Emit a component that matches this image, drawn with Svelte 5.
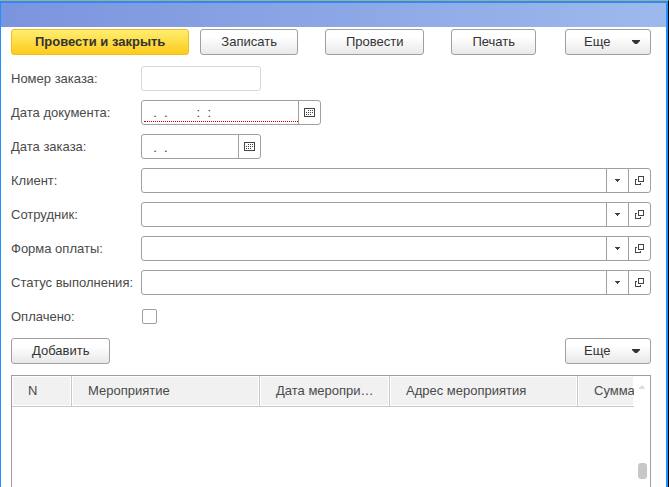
<script>
    let order = $state({
        number: "",
        documentDate: "  .  .        :  :  ",
        orderDate: "  .  .    ",
        paid: false,
    });

    let references = $state([
        { id: "client", label: "Клиент:", value: "" },
        { id: "employee", label: "Сотрудник:", value: "" },
        { id: "payment", label: "Форма оплаты:", value: "" },
        { id: "status", label: "Статус выполнения:", value: "" },
    ]);

    const columns = [
        { title: "N", kind: "number" },
        { title: "Мероприятие", kind: "wide" },
        { title: "Дата мероприятия", kind: "date" },
        { title: "Адрес мероприятия", kind: "wide" },
        { title: "Сумма", kind: "sum" },
    ];
</script>

{#snippet calendar()}
    <svg width="11" height="9" viewBox="0 0 11 9" shape-rendering="crispEdges">
        <path d="M0 0h11v9H0zM1 1v7h9V1z" fill="#444" fill-rule="evenodd" />
        <path
            d="M4 2h1v1H4zM6 2h1v1H6zM8 2h1v1H8zM2 4h1v1H2zM4 4h1v1H4zM6 4h1v1H6zM8 4h1v1H8zM2 6h1v1H2zM4 6h1v1H4zM6 6h1v1H6z"
            fill="#444"
        />
    </svg>
{/snippet}

{#snippet more()}
    <button class="btn more">
        Еще
        <svg width="8" height="5" viewBox="0 0 8 5">
            <path d="M0 0h8v1L5 4H3L0 1z" fill="#333" />
        </svg>
    </button>
{/snippet}

<div class="window">
    <header class="title"></header>

    <main>
        <div class="toolbar">
            <button class="btn primary">Провести и закрыть</button>
            <div class="commands">
                <button class="btn">Записать</button>
                <button class="btn">Провести</button>
                <button class="btn">Печать</button>
            </div>
            {@render more()}
        </div>

        <form class="fields">
            <div class="row">
                <label for="number">Номер заказа:</label>
                <div class="field short disabled">
                    <input id="number" type="text" bind:value={order.number} disabled />
                </div>
            </div>
            <div class="row">
                <label for="document-date">Дата документа:</label>
                <div class="field medium required">
                    <input id="document-date" type="text" bind:value={order.documentDate} />
                    <button type="button" aria-label="Выбрать дату документа">
                        {@render calendar()}
                    </button>
                </div>
            </div>
            <div class="row">
                <label for="order-date">Дата заказа:</label>
                <div class="field short">
                    <input id="order-date" type="text" bind:value={order.orderDate} />
                    <button type="button" aria-label="Выбрать дату заказа">
                        {@render calendar()}
                    </button>
                </div>
            </div>
            {#each references as ref (ref.id)}
                <div class="row">
                    <label for={ref.id}>{ref.label}</label>
                    <div class="field">
                        <input id={ref.id} type="text" bind:value={ref.value} />
                        <button type="button" aria-label="Выбрать из списка">
                            <svg width="5" height="3" viewBox="0 0 5 3" shape-rendering="crispEdges">
                                <path d="M0 0h5v1H4v1H3v1H2V2H1V1H0z" fill="#444" />
                            </svg>
                        </button>
                        <button type="button" aria-label="Открыть">
                            <svg width="9" height="9" viewBox="0 0 9 9" shape-rendering="crispEdges">
                                <path
                                    d="M3 0h6v6H3zM4 1v4h4V1zM0 3h2v1H1v4h4V7h1v2H0z"
                                    fill="#444"
                                    fill-rule="evenodd"
                                />
                            </svg>
                        </button>
                    </div>
                </div>
            {/each}
            <div class="row">
                <label for="paid">Оплачено:</label>
                <input id="paid" type="checkbox" bind:checked={order.paid} />
            </div>
        </form>

        <div class="toolbar events-bar">
            <button class="btn">Добавить</button>
            {@render more()}
        </div>

        <div class="events">
            <div class="grid">
                <table>
                    <thead>
                        <tr>
                            {#each columns as column}
                                <th class={column.kind} scope="col">{column.title}</th>
                            {/each}
                        </tr>
                    </thead>
                    <tbody></tbody>
                </table>
            </div>
            <div class="scroll">
                <svg width="6" height="4" viewBox="0 0 6 4">
                    <path d="M3 0l3 3v1H0V3z" fill="#ddd" />
                </svg>
                <div class="thumb"></div>
            </div>
        </div>
    </main>
</div>

<style>
    :global(body) {
        margin: 0;
        background: #fff;
    }

    .window {
        display: flex;
        flex-direction: column;
        box-sizing: border-box;
        height: 100vh;
        min-height: 480px;
        overflow: hidden;
        border-top: 1px solid #b5a582;
        border-right: 1px solid #000;
        font-family: "Liberation Sans", Arial, sans-serif;
        font-size: 13px;
        line-height: 16px;
        color: #4a4a4a;
    }

    .title {
        flex: none;
        height: 24px;
        border: solid #1e90ff;
        border-width: 2px 2px 0 1px;
        background: linear-gradient(to right, #7b94de, #9db9ec);
    }

    main {
        display: flex;
        flex-direction: column;
        flex: 1;
        min-height: 0;
        padding: 2px 15px 0 10px;
        border: solid #1e90ff;
        border-width: 0 2px 0 1px;
    }

    .toolbar {
        display: flex;
        gap: 11px;
    }

    .commands {
        display: flex;
        gap: 27px;
    }

    button,
    input {
        margin: 0;
        font: inherit;
        color: #333;
    }

    .btn {
        height: 26px;
        padding: 0 20px;
        border: 1px solid #a0a0a0;
        border-radius: 3px;
        background: linear-gradient(#fff 30%, #e8e8e8);
        white-space: nowrap;
    }

    .primary {
        padding: 0 23px;
        border-color: #f2bd1d;
        background: linear-gradient(#ffee70, #fccb1c);
        font-weight: bold;
    }

    .more {
        display: flex;
        align-items: center;
        justify-content: space-between;
        width: 86px;
        margin-left: auto;
        padding: 0 10px 0 18px;
    }

    .fields {
        display: flex;
        flex-direction: column;
        gap: 9px;
        margin-top: 11px;
    }

    .row {
        display: flex;
        align-items: center;
        min-height: 25px;
    }

    label {
        flex: none;
        width: 130px;
        white-space: nowrap;
    }

    .field {
        display: flex;
        flex: 1;
        box-sizing: border-box;
        min-width: 0;
        height: 25px;
        border: 1px solid #a0a0a0;
        border-radius: 3px;
        background: #fff;
    }

    .short {
        flex: none;
        width: 120px;
    }

    .medium {
        flex: none;
        width: 180px;
    }

    .disabled {
        border-color: #d8d8d8;
    }

    .field input {
        flex: 1;
        width: 0;
        min-width: 0;
        padding: 2px 4px 0;
        border: 0;
        outline: 0;
        background: none;
    }

    .required input {
        margin: 0 0 2px 2px;
        padding: 4px 2px 0;
        border-bottom: 1px dotted #c00;
    }

    .field button {
        display: flex;
        align-items: center;
        justify-content: center;
        flex: none;
        width: 22px;
        padding: 0;
        border: 0;
        border-left: 1px solid #a0a0a0;
        background: none;
    }

    #paid {
        appearance: none;
        width: 15px;
        height: 15px;
        margin-left: 1px;
        border: 1px solid #a0a0a0;
        border-radius: 2px;
    }

    #paid:checked {
        background: #666;
    }

    .events-bar {
        margin-top: 9px;
    }

    .events {
        display: flex;
        flex: 1;
        margin-top: 11px;
        border: 1px solid #a0a0a0;
        border-bottom: 0;
    }

    .grid {
        flex: 1;
        min-width: 0;
        overflow: hidden;
    }

    table {
        width: 100%;
        table-layout: fixed;
        border-collapse: separate;
        border-spacing: 0;
    }

    th {
        box-sizing: border-box;
        height: 31px;
        padding: 0 10px 0 16px;
        border-right: 1px solid #c8c8c8;
        border-bottom: 1px solid #c8c8c8;
        background: #f1f1f1;
        box-shadow: inset 0 0 0 1px #fff;
        font-weight: normal;
        text-align: left;
        white-space: nowrap;
        overflow: hidden;
        text-overflow: ellipsis;
    }

    .number {
        width: 60px;
    }

    .date {
        width: 130px;
    }

    .sum {
        width: 56px;
        padding-right: 0;
        border-right: 0;
        text-overflow: clip;
    }

    .scroll {
        display: flex;
        flex-direction: column;
        align-items: center;
        justify-content: space-between;
        flex: none;
        width: 16px;
        padding: 9px 0 8px;
        box-sizing: border-box;
    }

    .thumb {
        width: 9px;
        height: 16px;
        border-radius: 3px;
        background: #c8c8c8;
    }
</style>
